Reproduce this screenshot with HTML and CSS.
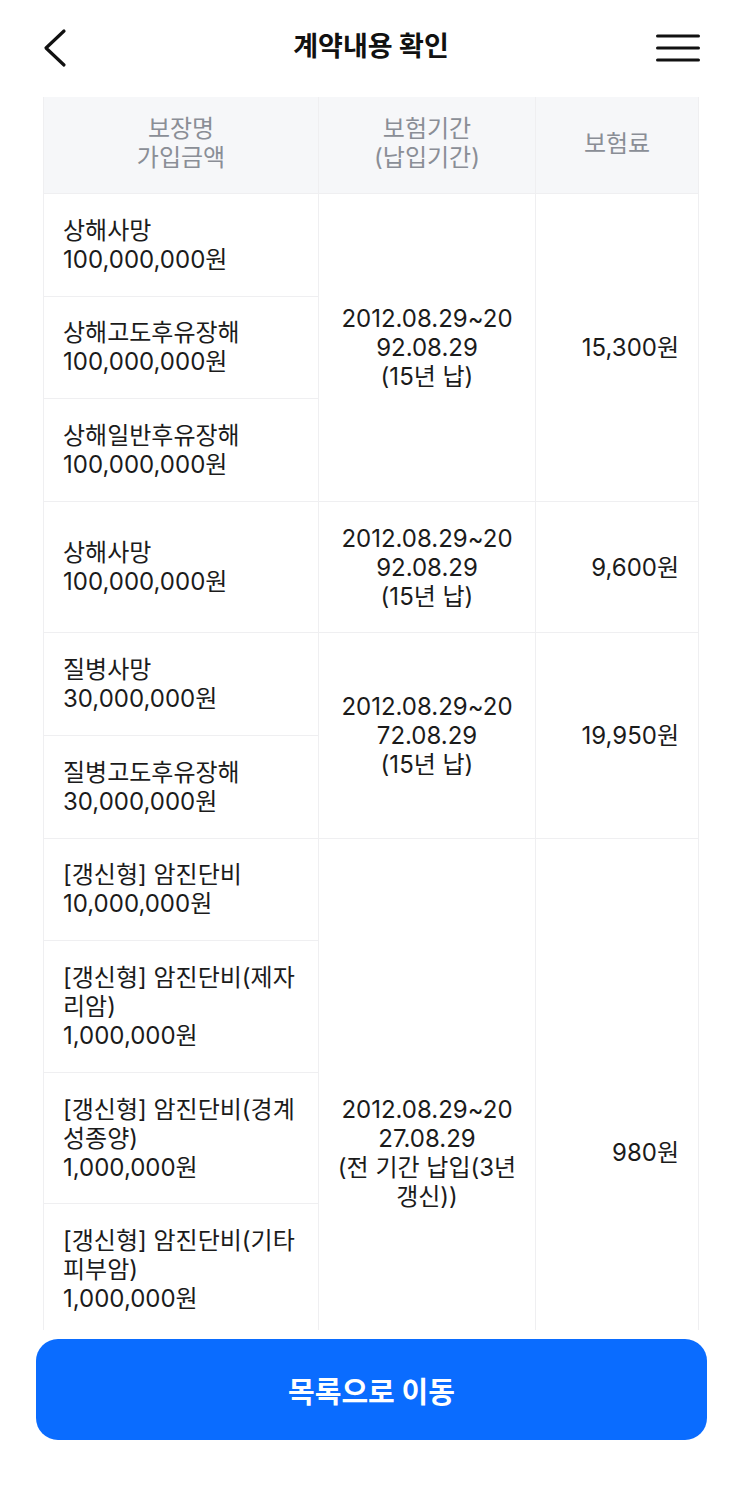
FILE: index.html
```html
<!DOCTYPE html>
<html lang="ko">
<head>
  <meta charset="UTF-8" />
  <meta name="viewport" content="width=device-width, initial-scale=1.0"/>
  <title>계약내용 확인</title>
  <link rel="stylesheet" href="styles.css">
</head>
<body>

  <!-- Top navigation -->
  <header class="top-bar">
    <button class="icon-btn" aria-label="뒤로">
      <svg width="30" height="44" viewBox="0 0 30 44">
        <polyline points="22,4 4,21 22,38" fill="none" stroke="#111" stroke-width="3.2" stroke-linecap="round" stroke-linejoin="round"/>
      </svg>
    </button>
    <h1 class="page-title">계약내용 확인</h1>
    <button class="icon-btn menu-btn" aria-label="메뉴">
      <svg width="44" height="32" viewBox="0 0 44 32">
        <line x1="1.5" y1="4" x2="42.5" y2="4" stroke="#111" stroke-width="3" stroke-linecap="round"/>
        <line x1="1.5" y1="16" x2="42.5" y2="16" stroke="#111" stroke-width="3" stroke-linecap="round"/>
        <line x1="1.5" y1="28" x2="42.5" y2="28" stroke="#111" stroke-width="3" stroke-linecap="round"/>
      </svg>
    </button>
  </header>

  <main class="content">
    <table class="coverage-table">
      <colgroup>
        <col class="col-name">
        <col class="col-period">
        <col class="col-premium">
      </colgroup>
      <thead>
        <tr>
          <th>보장명<br>가입금액</th>
          <th>보험기간<br>(납입기간)</th>
          <th>보험료</th>
        </tr>
      </thead>
      <tbody>
        <tr>
          <td class="name">상해사망<br>100,000,000원</td>
          <td class="period" rowspan="3">2012.08.29~2092.08.29<br>(15년 납)</td>
          <td class="premium" rowspan="3">15,300원</td>
        </tr>
        <tr>
          <td class="name">상해고도후유장해<br>100,000,000원</td>
        </tr>
        <tr>
          <td class="name">상해일반후유장해<br>100,000,000원</td>
        </tr>

        <tr>
          <td class="name">상해사망<br>100,000,000원</td>
          <td class="period">2012.08.29~2092.08.29<br>(15년 납)</td>
          <td class="premium">9,600원</td>
        </tr>

        <tr>
          <td class="name">질병사망<br>30,000,000원</td>
          <td class="period" rowspan="2">2012.08.29~2072.08.29<br>(15년 납)</td>
          <td class="premium" rowspan="2">19,950원</td>
        </tr>
        <tr>
          <td class="name">질병고도후유장해<br>30,000,000원</td>
        </tr>

        <tr>
          <td class="name">[갱신형] 암진단비<br>10,000,000원</td>
          <td class="period" rowspan="5">2012.08.29~2027.08.29<br>(전 기간 납입(3년 갱신))</td>
          <td class="premium" rowspan="5">980원</td>
        </tr>
        <tr>
          <td class="name">[갱신형] 암진단비(제자리암)<br>1,000,000원</td>
        </tr>
        <tr>
          <td class="name">[갱신형] 암진단비(경계성종양)<br>1,000,000원</td>
        </tr>
        <tr>
          <td class="name">[갱신형] 암진단비(기타피부암)<br>1,000,000원</td>
        </tr>
        <tr class="row-hidden">
          <td class="name"></td>
        </tr>
      </tbody>
    </table>
  </main>

  <footer class="bottom-bar">
    <button class="list-btn">목록으로 이동</button>
  </footer>

</body>
</html>
```

FILE: styles.css
```css
/* Base */
html, body {
  height: 100%;
}

body {
  margin: 0;
  display: flex;
  flex-direction: column;
  font-family: Inter, "Noto Sans CJK KR", sans-serif;
  color: #1b1b1b;
  background: #fff;
}

button {
  font-family: inherit;
  border: none;
  background: none;
  padding: 0;
  cursor: pointer;
}

/* Top navigation */
.top-bar {
  height: 97px;
  flex-shrink: 0;
  display: flex;
  align-items: flex-start;
  justify-content: space-between;
  padding: 0 42px;
  box-sizing: border-box;
}

.top-bar .icon-btn {
  display: flex;
  width: 44px;
  margin-top: 27px;
}

.top-bar .menu-btn {
  margin-top: 32px;
}

.page-title {
  margin: 27px 0 0;
  font-size: 27px;
  font-weight: 700;
  line-height: 40px;
  color: #111;
}

/* Table */
.content {
  flex: 1;
  overflow: hidden;
  padding: 0 43px;
}

.coverage-table {
  width: 100%;
  border-collapse: collapse;
  table-layout: fixed;
  font-size: 24px;
  line-height: 29px;
}

.col-name { width: 275px; }
.col-period { width: 217px; }

.coverage-table th,
.coverage-table td {
  border: 1px solid #efeff1;
  vertical-align: middle;
}

.coverage-table th {
  background: #f6f7f9;
  color: #8a8e96;
  font-weight: 400;
  padding: 17px 10px 21px;
  text-align: center;
}

.coverage-table thead tr th {
  border-top: none;
}

.coverage-table td {
  padding: 21.8px 19px;
}

.coverage-table td.name {
  text-align: left;
  padding-right: 12px;
}

.coverage-table td.period {
  text-align: center;
  word-break: break-all;
  padding-left: 17px;
  padding-right: 17px;
}

.coverage-table td.premium {
  text-align: right;
  padding-right: 19px;
}

.row-hidden td {
  height: 87px;
}

/* Bottom button */
.bottom-bar {
  flex-shrink: 0;
  padding: 9px 35px 60px 36px;
  background: #fff;
}

.list-btn {
  display: block;
  width: 100%;
  height: 101px;
  border-radius: 22px;
  background: #0a6cff;
  color: #fff;
  font-size: 29px;
  font-weight: 700;
}
```
